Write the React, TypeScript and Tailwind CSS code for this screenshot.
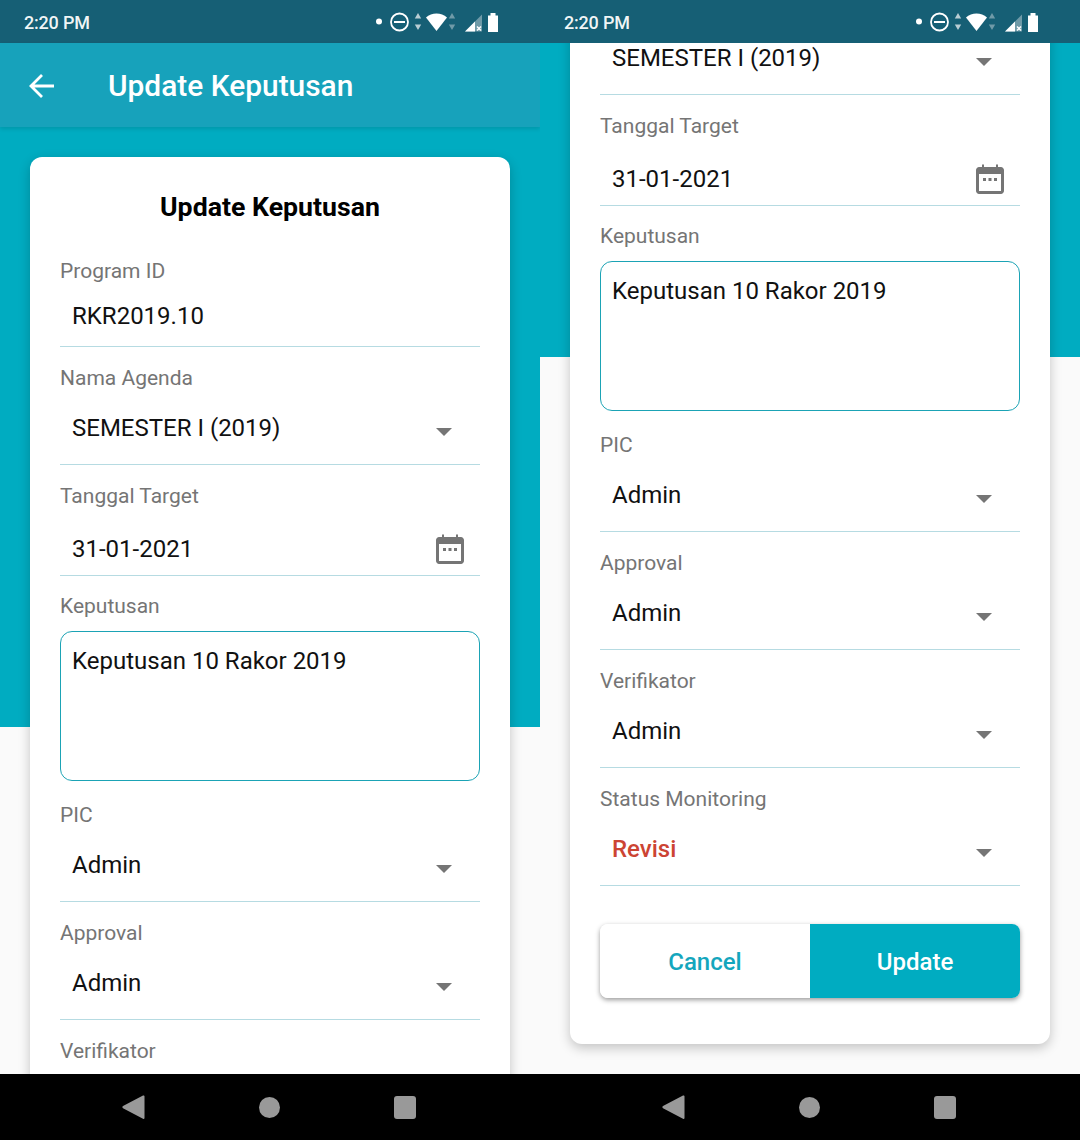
const roboto = "font-['Roboto',sans-serif]";

function StatusBar() {
  return (
    <div className="flex h-[43px] shrink-0 items-center justify-between bg-[#165f75] pl-6 pr-10 text-white">
      <span className="pt-[2px] text-lg font-medium tracking-[-0.2px] text-white/95">2:20 PM</span>
      <svg width="132" height="22" viewBox="0 0 132 22" fill="none">
        <circle cx="11" cy="10.500" r="3" fill="#fff" />
        <circle cx="31.500" cy="11" r="8.500" stroke="#fff" strokeWidth="1.800" />
        <rect x="26" y="10" width="11" height="2" fill="#fff" />
        <path d="M50 2l3.200 5.500h-6.400zM50 19l3.200-5.500h-6.400z" fill="#b9cdd4" />
        <path d="M58 6.500c5.600-5.400 15.400-5.400 21 0l-10.500 13.500z" fill="#fff" />
        <path d="M84 2l3.200 5.500h-6.400zM84 19l3.200-5.500h-6.400z" fill="#6f9aa8" />
        <path d="M97 20.500L114 3.500v17z" fill="#6f9aa8" />
        <path d="M97 20.500l10-10v10z" fill="#fff" />
        <path d="M109 15.500l4 4m0-4l-4 4" stroke="#fff" strokeWidth="1.500" />
        <path d="M120 4.500h2.500V2h5v2.500h2.500V21h-10z" fill="#fff" />
      </svg>
    </div>
  );
}

function NavBar() {
  return (
    <div className="flex h-[66px] shrink-0 items-center bg-black pl-[121px]">
      <svg width="24" height="26" viewBox="0 0 24 26" fill="#999">
        <path d="M23.500 2.500v21.500c0 1-.8 1.300-1.500.8L2 14.200c-.8-.5-.8-1.600 0-2.100L22 1.600c.7-.4 1.500 0 1.500.9z" />
      </svg>
      <div className="ml-[114px] h-[21px] w-[21px] rounded-full bg-[#999]" />
      <div className="ml-[114px] h-[23px] w-[22px] rounded-[3px] bg-[#999]" />
    </div>
  );
}

function FieldLabel({ children }: { children: string }) {
  return <div className="h-6 text-[21px] leading-6 text-[#757575]">{children}</div>;
}

function TextField({ label, value }: { label: string; value: string }) {
  return (
    <div className="border-b border-[#b6dbe2] pt-[19px]">
      <FieldLabel>{label}</FieldLabel>
      <div className="flex h-[63px] items-center pt-[2px] pl-3 text-2xl text-[#111]">{value}</div>
    </div>
  );
}

function SelectField({ label, value, danger }: { label: string; value: string; danger?: boolean }) {
  return (
    <div className="border-b border-[#b6dbe2] pt-[19px]">
      <FieldLabel>{label}</FieldLabel>
      <div className="flex h-[74px] items-center justify-between pt-[1px] pl-3 pr-7">
        <span className={danger ? 'text-2xl font-medium text-[#cc4433]' : 'text-2xl text-[#111]'}>{value}</span>
        <svg width="16" height="8" viewBox="0 0 16 8" fill="#757575" className="mt-2">
          <path d="M0 0h16L8 8z" />
        </svg>
      </div>
    </div>
  );
}

function DateField({ label, value }: { label: string; value: string }) {
  return (
    <div className="border-b border-[#b6dbe2] pt-[19px]">
      <FieldLabel>{label}</FieldLabel>
      <div className="flex h-[67px] items-center justify-between pl-3 pr-4 pt-[15px] text-2xl text-[#111]">
        <span>{value}</span>
        <svg width="28" height="32" viewBox="0 0 28 32" fill="#757575" className="-mt-[1px]">
          <path d="M6 1.500h2V4h12V1.500h2V4h3c1.500 0 3 1.500 3 3v21c0 1.500-1.500 3-3 3H3c-1.500 0-3-1.500-3-3V7c0-1.500 1.500-3 3-3h3z" />
          <rect x="3" y="11" width="22" height="17" fill="#fff" />
          <rect x="7" y="15" width="3" height="3" />
          <rect x="12.500" y="15" width="3" height="3" />
          <rect x="18" y="15" width="3" height="3" />
        </svg>
      </div>
    </div>
  );
}

function UpdateForm() {
  return (
    <div className="mx-[30px] h-[1257px] rounded-xl bg-white px-[30px] shadow-[0_4px_12px_rgba(0,0,0,0.22)]">
      <h2 className="h-[83px] pt-[34px] text-center text-[26.700px] leading-8 font-bold text-black">Update Keputusan</h2>
      <TextField label="Program ID" value="RKR2019.10" />
      <SelectField label="Nama Agenda" value="SEMESTER I (2019)" />
      <DateField label="Tanggal Target" value="31-01-2021" />
      <div className="pt-[18px]">
        <FieldLabel>Keputusan</FieldLabel>
        <div className="mt-[13px] h-[150px] rounded-xl border border-[#1ba3b5] pt-[12px] pl-[11px] text-2xl leading-[34px] text-[#111]">
          Keputusan 10 Rakor 2019
        </div>
      </div>
      <div className="pt-[3px]">
        <SelectField label="PIC" value="Admin" />
      </div>
      <SelectField label="Approval" value="Admin" />
      <SelectField label="Verifikator" value="Admin" />
      <SelectField label="Status Monitoring" value="Revisi" danger />
      <div className="mt-[38px] flex h-[74px] overflow-hidden rounded-lg shadow-[0_2px_5px_rgba(0,0,0,0.4)]">
        <button className="flex-1 bg-white pt-[1px] text-2xl font-medium text-[#14a6bd]">Cancel</button>
        <button className="flex-1 bg-[#00acc1] pt-[1px] text-2xl font-medium text-white">Update</button>
      </div>
    </div>
  );
}

function Screen({ scrolled }: { scrolled?: boolean }) {
  return (
    <div className="flex h-[1140px] w-[540px] flex-col overflow-hidden">
      <StatusBar />
      {!scrolled && (
        <div className="z-10 flex h-[84px] shrink-0 items-center bg-[#17a2bb] pt-[2px] pl-[29px] shadow-[0_2px_4px_rgba(0,0,0,0.12)]">
          <svg width="26" height="26" viewBox="0 0 26 26" fill="none" stroke="#fff" strokeWidth="2.800">
            <path d="M25 13H2M13 2L2 13l11 11" />
          </svg>
          <h1 className="ml-[53px] text-[29.900px] font-medium text-white">Update Keputusan</h1>
        </div>
      )}
      <div className="min-h-0 flex-1 overflow-hidden bg-[#fafafa]">
        <div className={`bg-[linear-gradient(#00acc1_600px,#fafafa_600px)] pt-[30px] pb-[30px] ${scrolled ? '-mt-[286px]' : ''}`}>
          <UpdateForm />
        </div>
      </div>
      <NavBar />
    </div>
  );
}

export default function App() {
  return (
    <div className={`flex w-[1080px] ${roboto}`}>
      <Screen />
      <Screen scrolled />
    </div>
  );
}
